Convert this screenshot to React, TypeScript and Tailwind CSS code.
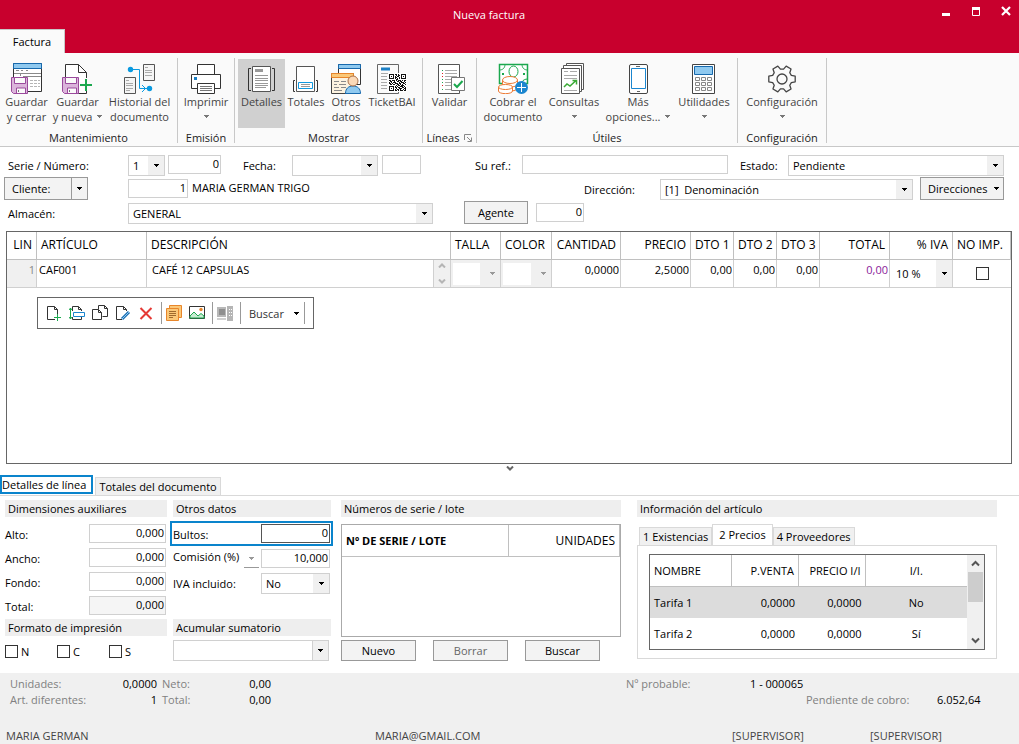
import { useState } from "react";
import type { ReactNode } from "react";
import clsx from "clsx";

function Caret({ className = "text-black" }: { className?: string }) {
  return (
    <svg width="5" height="3" viewBox="0 0 5 3" className={className} shapeRendering="crispEdges" aria-hidden="true">
      <path d="M0 0h5v1H0zM1 1h3v1H1zM2 2h1v1H2z" fill="currentColor" />
    </svg>
  );
}

function Icon({ children }: { children: ReactNode }) {
  return (
    <svg width="32" height="32" viewBox="0 0 32 32" fill="none" className="shrink-0" aria-hidden="true">
      {children}
    </svg>
  );
}

function Disk() {
  return (
    <g stroke="#9a4a9c">
      <path d="M.5 15.500h16v16h-14l-2-2z" fill="#dbb4db" />
      <path d="M3.500 15.500h11v6h-11z" fill="#fafafa" />
      <path d="M5.500 31v-5h9v5" fill="#fafafa" />
      <path d="M7.500 28v2" stroke="#777" />
    </g>
  );
}

function SaveCloseIcon() {
  return (
    <Icon>
      <path d="M2.500 1.500h28v28h-28z" fill="#fff" stroke="#333" />
      <path d="M2.500 1.500h28v5h-28z" fill="#8fc9ef" stroke="#1769ad" />
      <path d="M5 8.500h3m2 0h2m3 0h2M3 11.500h27M9.500 14v-3M12 14.500h18" stroke="#8a8a8a" />
      <path d="M19 18.500h3m1 0h3m1 0h2M19 21.500h3m1 0h3m1 0h2M19 24.500h3m1 0h3m1 0h2" stroke="#b5b5b5" />
      <Disk />
    </Icon>
  );
}

function SaveNewIcon() {
  return (
    <Icon>
      <path d="M3.500 2.500h13l8 8v21h-21z" fill="#fff" stroke="#333" />
      <path d="M16.500 2.500v8h8" stroke="#333" />
      <Disk />
      <path d="M18 22.500h13M24.500 16v13" stroke="#fafafa" strokeWidth="4" />
      <path d="M18 23h12M24 17v12" stroke="#1ba84e" strokeWidth="2" />
    </Icon>
  );
}

function HistoryIcon() {
  return (
    <Icon>
      <path d="M19.500 2.500h11v16h-11zM.5 15.500h11v16H.5z" fill="#f5f5f5" stroke="#555" />
      <path d="M21 5.500h3M21 8.500h7M21 10.500h7M21 13.500h7M2 18.500h3M2 21.500h7M2 23.500h7M2 26.500h7M2 28.500h4" stroke="#aaa" />
      <path d="M7 7.500h8.500v19H24M18 23l3.500 3.500L18 30" stroke="#0a9ae0" />
      <circle cx="6.500" cy="7.500" r="2.700" fill="#0a9ae0" />
      <circle cx="25.500" cy="26.500" r="2.700" fill="#0a9ae0" />
    </Icon>
  );
}

function PrintIcon() {
  return (
    <Icon>
      <path d="M7.500 12.500v-10h17v10M1.500 12.500h29v14h-29z" fill="#fff" stroke="#333" />
      <path d="M7.500 21.500h17v10h-17z" fill="#fff" stroke="#333" />
      <path d="M10 24.500h12M10 26.500h12M10 28.500h12" stroke="#777" />
      <path d="M4 15h3v3H4z" fill="#1b7fc4" />
    </Icon>
  );
}

function DetailsIcon() {
  return (
    <Icon>
      <path d="M6.500 4.500h18v25h-18z" fill="#fff" stroke="#555" />
      <path d="M9 8.500h8" stroke="#999" strokeWidth="3" />
      <path d="M9 13.500h13M9 16.500h13M9 18.500h13M9 21.500h13M9 23.500h13M9 25.500h11" stroke="#999" />
      <path d="M5 6.500H2.500v22H5M26 6.500h2.500v22H26" stroke="#333" />
    </Icon>
  );
}

function TotalsIcon() {
  return (
    <Icon>
      <path d="M6.500 4.500h18v25h-18z" fill="#fff" stroke="#555" />
      <path d="M5 18.500H3.500v11H5M26 18.500h1.500v11H26" stroke="#333" />
      <path d="M8.500 20.500h14v6h-14z" stroke="#1199e0" fill="#fff" />
      <path d="M11 22.500h9M11 24.500h9" stroke="#999" />
    </Icon>
  );
}

function OtherDataIcon() {
  return (
    <Icon>
      <path d="M8.500 2.500h22v20h-22z" fill="#fff" stroke="#333" />
      <path d="M8.500 2.500h22v4h-22z" fill="#8fc9ef" stroke="#1769ad" />
      <path d="M1.500 11.500h22v20h-22z" fill="#fdf3e0" stroke="#444" />
      <path d="M1.500 11.500h22v4h-22z" fill="#fbc878" stroke="#e8862b" />
      <path d="M4 19.500h5m2 0h5M4 22.500h3m2 0h7M4 25.500h5m2 0h5M4 28.500h8" stroke="#8a8a8a" />
      <path d="M15.500 31.500c0-5 3-7.500 7.500-7.500s7.500 2.500 7.500 7.500z" fill="#8fc9ef" stroke="#1769ad" />
      <circle cx="23" cy="19" r="5" fill="#fbd9b8" stroke="#a9714b" />
    </Icon>
  );
}

const QR_ROWS = [
  "11111011010011111",
  "10001001011010001",
  "10101010110010101",
  "10001011001010001",
  "11111010101011111",
  "00000001100000000",
  "11011101011101011",
  "01100100110110010",
  "10101110001011101",
  "11010011101100110",
  "01101100110101001",
  "00000001011011100",
  "11111010100111010",
  "10001011011001101",
  "10101001001110011",
  "10001010110100101",
  "11111011010111011",
];

function TicketIcon() {
  return (
    <Icon>
      <path d="M1.500 2.500h21v29h-21z" fill="#fafafa" stroke="#666" />
      <path d="M5 7h9" stroke="#1b7fc4" strokeWidth="3" />
      <path d="M5 11.500h13M5 14.500h6M5 17.500h6M5 20.500h6M5 23.500h6M5 26.500h6" stroke="#aaa" />
      <path d="M12 11h19v19H12z" fill="#fff" />
      <g fill="#111" transform="translate(13 12)" shapeRendering="crispEdges">
        {QR_ROWS.flatMap((row, y) =>
          row.split("").map((c, x) => (c === "1" ? <rect key={`${x}-${y}`} x={x} y={y} width="1" height="1" /> : null))
        )}
      </g>
    </Icon>
  );
}

function ValidateIcon() {
  return (
    <Icon>
      <path d="M4.500 2.500h21v29h-21z" fill="#fff" stroke="#555" />
      <path d="M11 8.500h12M11 11.500h12M11 14.500h12M11 17.500h7M11 20.500h7M11 23.500h7M11 27.500h12" stroke="#aaa" />
      <path d="M8 8.500h1m-1 9h1m-1 3h1m-1 7h1" stroke="#1ba84e" />
      <path d="M8 11.500h1m-1 3h1m-1 9h1" stroke="#d22" />
      <path d="M17.500 15.500h13v13h-13z" fill="#fff" stroke="#777" />
      <path d="M20 22l3 3 5.500-6" stroke="#1ba84e" strokeWidth="2" />
    </Icon>
  );
}

function CashIcon() {
  return (
    <Icon>
      <path d="M2.500 2.500h28v19h-28z" fill="#fff" stroke="#1ba84e" strokeWidth="1.500" />
      <path d="M2 8c4 0 6-2 6-6M31 8c-4 0-6-2-6-6M31 17c-3 0-5 1-6 3" stroke="#1ba84e" />
      <ellipse cx="16.500" cy="9.500" rx="4.500" ry="5.500" fill="#fff" stroke="#1ba84e" />
      <path d="M5 11h2v2H5zM26 11h2v2h-2z" fill="#1ba84e" />
      <g fill="#fff" stroke="#ec7a35">
        <path d="M5.500 18v8c0 4 15 4 15 0v-8" />
        <path d="M5.500 22c0 4 15 4 15 0" />
        <ellipse cx="13" cy="18" rx="7.500" ry="3.500" />
        <path d="M1.500 25v4c0 3.500 14 3.500 14 0v-4" />
        <ellipse cx="8.500" cy="25" rx="7" ry="2.500" />
      </g>
      <circle cx="24.500" cy="25.500" r="6.500" fill="#1b86cf" />
      <path d="M20 25.500h9M24.500 21v9" stroke="#fff" />
    </Icon>
  );
}

function QueriesIcon() {
  return (
    <Icon>
      <path d="M8.500 1.500h17v26h-17z" fill="#fff" stroke="#555" />
      <path d="M5.500 3.500h18v26h-18z" fill="#fff" stroke="#555" />
      <path d="M3.500 6.500h18v25h-18z" fill="#fff" stroke="#555" />
      <path d="M6 9.500h4m2 0h7M6 13.500h13M6 16.500h13M6 28.500h13" stroke="#aaa" />
      <path d="M6 25l3-3 3 2 6-5.500M14.500 18.500h4v4" stroke="#3aaa35" strokeWidth="1.500" />
    </Icon>
  );
}

function PhoneIcon() {
  return (
    <Icon>
      <rect x="7.500" y="2.500" width="18" height="29" rx="1.500" fill="#fff" stroke="#444" />
      <path d="M9.500 6.500h14v20h-14z" stroke="#1b86cf" />
      <path d="M14 4.500h4M15 29.500h3" stroke="#666" />
    </Icon>
  );
}

function CalculatorIcon() {
  return (
    <Icon>
      <path d="M4.500 2.500h22v29h-22z" fill="#fff" stroke="#444" />
      <path d="M6.500 4.500h18v8h-18z" fill="#8fc9ef" stroke="#1769ad" />
      <g stroke="#888">
        {[15.5, 20.5, 25.5].flatMap((y) => [7.5, 13.5, 19.5].map((x) => <path key={`${x}-${y}`} d={`M${x} ${y}h4v3h-4z`} />))}
      </g>
    </Icon>
  );
}

const gearPoints = [0, 60, 120, 180, 240, 300]
  .flatMap((base) => [
    [10, -21],
    [13.5, -12],
    [13.5, 12],
    [10, 21],
  ].map(([r, a]) => {
    const rad = ((base + a) * Math.PI) / 180;
    return `${16 + r * Math.cos(rad)},${17 + r * Math.sin(rad)}`;
  }))
  .join(" ");

function GearIcon() {
  return (
    <Icon>
      <polygon points={gearPoints} stroke="#444" strokeWidth="1.300" strokeLinejoin="round" />
      <circle cx="16" cy="17" r="5" stroke="#444" strokeWidth="1.300" />
    </Icon>
  );
}

type RibbonItem = {
  icon: ReactNode;
  lines: string[];
  caret?: "inline" | "below";
  active?: boolean;
  width: string;
};

const ribbonGroups: { label: string; launcher?: boolean; width: string; items: RibbonItem[] }[] = [
  {
    label: "Mantenimiento",
    width: "w-[178px]",
    items: [
      { icon: <SaveCloseIcon />, lines: ["Guardar", "y cerrar"], width: "w-[52px]" },
      { icon: <SaveNewIcon />, lines: ["Guardar", "y nueva"], caret: "inline", width: "w-[50px]" },
      { icon: <HistoryIcon />, lines: ["Historial del", "documento"], width: "w-[74px]" },
    ],
  },
  { label: "Emisión", width: "w-[57px]", items: [{ icon: <PrintIcon />, lines: ["Imprimir"], caret: "below", width: "w-14" }] },
  {
    label: "Mostrar",
    width: "w-[188px]",
    items: [
      { icon: <DetailsIcon />, lines: ["Detalles"], active: true, width: "w-[47px]" },
      { icon: <TotalsIcon />, lines: ["Totales"], width: "w-[42px]" },
      { icon: <OtherDataIcon />, lines: ["Otros", "datos"], width: "w-[38px]" },
      { icon: <TicketIcon />, lines: ["TicketBAI"], width: "w-[54px]" },
    ],
  },
  { label: "Líneas", launcher: true, width: "w-[54px]", items: [{ icon: <ValidateIcon />, lines: ["Validar"], width: "w-[52px]" }] },
  {
    label: "Útiles",
    width: "w-[261px]",
    items: [
      { icon: <CashIcon />, lines: ["Cobrar el", "documento"], width: "w-[66px]" },
      { icon: <QueriesIcon />, lines: ["Consultas"], caret: "below", width: "w-[56px]" },
      { icon: <PhoneIcon />, lines: ["Más", "opciones..."], caret: "inline", width: "w-[72px]" },
      { icon: <CalculatorIcon />, lines: ["Utilidades"], caret: "below", width: "w-[60px]" },
    ],
  },
  { label: "Configuración", width: "w-[89px]", items: [{ icon: <GearIcon />, lines: ["Configuración"], caret: "below", width: "w-[80px]" }] },
];

function RibbonButton({ item }: { item: RibbonItem }) {
  return (
    <button
      className={clsx(
        "flex h-[69px] flex-col items-center pt-[3px] leading-[15px] text-[#444]",
        item.width,
        item.active && "bg-[#d0d0d0]"
      )}
    >
      {item.icon}
      {item.lines.map((line, i) => (
        <span key={line} className="flex items-center gap-[5px] whitespace-nowrap">
          {line}
          {item.caret === "inline" && i === item.lines.length - 1 && <Caret className="text-[#777]" />}
        </span>
      ))}
      {item.caret === "below" && (
        <span className="flex h-[15px] items-center">
          <Caret className="text-[#777]" />
        </span>
      )}
    </button>
  );
}

function Ribbon() {
  return (
    <div className="flex h-[94px] overflow-hidden border-b border-[#c8c8c8] bg-[#fafafa] pt-[5px]">
      {ribbonGroups.map((group) => (
        <div key={group.label} className={clsx("flex h-[85px] shrink-0 flex-col items-center border-r border-[#c8c8c8]", group.width)}>
          <div className="flex pt-px">
            {group.items.map((item) => (
              <RibbonButton key={item.lines.join(" ")} item={item} />
            ))}
          </div>
          <div className="mt-0.5 flex items-center gap-[5px] leading-[16px] text-[#222]">
            {group.label}
            {group.launcher && (
              <button aria-label="Opciones de líneas">
                <svg width="8" height="8" viewBox="0 0 8 8" fill="none" stroke="#888" aria-hidden="true">
                  <path d="M.5 6V.5H7M3 3l4 4M7.500 3.500v4h-4" />
                </svg>
              </button>
            )}
          </div>
        </div>
      ))}
    </div>
  );
}

function Select({
  id,
  value,
  className,
  label,
  disabled,
  arrow = "bg-[#f0f0f0]",
}: {
  id?: string;
  value: string;
  className?: string;
  label?: string;
  disabled?: boolean;
  arrow?: string;
}) {
  return (
    <span className={clsx("grid h-[21px] border border-[#d0d0d0] bg-white", className)}>
      <select
        id={id}
        aria-label={label}
        disabled={disabled}
        className="col-start-1 row-start-1 w-full min-w-0 appearance-none bg-transparent pl-1 outline-none"
        defaultValue={value}
      >
        <option>{value}</option>
      </select>
      <span className={clsx("pointer-events-none col-start-1 row-start-1 flex w-4 items-center justify-center justify-self-end", arrow)}>
        <Caret className={disabled ? "text-[#999]" : "text-black"} />
      </span>
    </span>
  );
}

function Field({ id, value = "", className, label }: { id?: string; value?: string; className?: string; label?: string }) {
  return (
    <input
      id={id}
      aria-label={label}
      defaultValue={value}
      className={clsx("h-[19px] min-w-0 border border-[#d0d0d0] pr-px pb-0.5 text-right outline-none", className)}
    />
  );
}

function HeaderForm() {
  return (
    <div className="grid gap-y-[3px] pt-2 pr-[15px] pb-1">
      <div className="flex h-[19px] items-start">
        <label htmlFor="serie" className="w-[128px] shrink-0 pt-[3px] pl-2">Serie / Número:</label>
        <Select id="serie" value="1" className="w-[37px]" />
        <Field label="Número" value="0" className="ml-[3px] w-[53px]" />
        <label htmlFor="fecha" className="ml-[22px] w-[49px] pt-[3px]">Fecha:</label>
        <Select id="fecha" value="" className="w-[86px]" />
        <Field label="Hora" className="ml-1 w-[39px]" />
        <label htmlFor="ref" className="ml-[54px] w-[47px] shrink-0 pt-[3px]">Su ref.:</label>
        <Field id="ref" className="flex-1" />
        <label htmlFor="estado" className="ml-3 w-12 shrink-0 pt-[3px]">Estado:</label>
        <Select id="estado" value="Pendiente" className="w-[216px]" />
      </div>
      <div className="flex h-[23px] items-start">
        <div className="ml-1 flex h-[23px] w-[84px] border border-[#999] bg-[#f3f3f3]">
          <button className="flex-1 pl-[7px] text-left">Cliente:</button>
          <button aria-label="Más opciones de cliente" className="flex w-4 items-center justify-center border-l border-[#999]">
            <Caret />
          </button>
        </div>
        <Field label="Código de cliente" value="1" className="mt-0.5 ml-10 w-[60px]" />
        <span className="ml-1 pt-[3px]">MARIA GERMAN TRIGO</span>
        <label htmlFor="direccion" className="ml-auto w-[76px] pt-[5px]">Dirección:</label>
        <Select id="direccion" value={"[1]\u00a0 Denominación"} className="mt-0.5 w-[253px]" />
        <button className="ml-[7px] flex h-[23px] w-[84px] items-center justify-between border border-[#999] bg-[#f3f3f3] pr-1 pl-[7px]">
          Direcciones
          <Caret />
        </button>
      </div>
      <div className="flex h-[24px] items-start">
        <label htmlFor="almacen" className="w-[128px] shrink-0 pt-[3px] pl-2">Almacén:</label>
        <Select id="almacen" value="GENERAL" className="w-[305px]" />
        <button className="-mt-0.5 ml-[31px] h-[23px] w-16 border border-[#999] bg-[#f3f3f3]">Agente</button>
        <Field label="Agente" value="0" className="ml-2 w-12" />
      </div>
    </div>
  );
}

const columns = [
  { name: "LIN", width: "w-[30px]", align: "text-right" },
  { name: "ARTÍCULO", width: "w-[110px]", align: "text-left" },
  { name: "DESCRIPCIÓN", width: "", align: "text-left" },
  { name: "TALLA", width: "w-[50px]", align: "text-left" },
  { name: "COLOR", width: "w-[51px]", align: "text-left" },
  { name: "CANTIDAD", width: "w-[69px]", align: "text-right" },
  { name: "PRECIO", width: "w-[70px]", align: "text-right" },
  { name: "DTO 1", width: "w-[43px]", align: "text-right" },
  { name: "DTO 2", width: "w-[43px]", align: "text-right" },
  { name: "DTO 3", width: "w-[43px]", align: "text-right" },
  { name: "TOTAL", width: "w-[70px]", align: "text-right" },
  { name: "% IVA", width: "w-[63px]", align: "text-right" },
  { name: "NO IMP.", width: "w-[58px]", align: "text-left" },
];

const amounts = [
  { name: "Cantidad", value: "0,0000" },
  { name: "Precio", value: "2,5000" },
  { name: "Dto 1", value: "0,00" },
  { name: "Dto 2", value: "0,00" },
  { name: "Dto 3", value: "0,00" },
  { name: "Total", value: "0,00" },
];

const toolbar: { label: string; icon: ReactNode }[] = [
  {
    label: "Nueva línea",
    icon: (
      <>
        <path d="M9 14.500H1.500v-13h7l3 3V9" fill="#fff" stroke="#333" />
        <path d="M8.500 1.500v3h3" stroke="#333" />
        <path d="M8 12.500h7M11.500 9v7" stroke="#1ba84e" />
      </>
    ),
  },
  {
    label: "Insertar línea",
    icon: (
      <>
        <path d="M3.500 6V1.500h6l3 3V6M3.500 12v2.500h9V12M9.500 1.500v3h3" stroke="#333" />
        <path d="M4.500 7.500h11v4h-11z" fill="#fff" stroke="#1b86cf" />
        <path d="M1.500 3v11M0 5l1.500-2L3 5M0 12l1.500 2L3 12" stroke="#1ba84e" />
      </>
    ),
  },
  {
    label: "Duplicar línea",
    icon: (
      <>
        <path d="M6.500 4V.5h6l3 3v8h-5M12.500.5v3h3" stroke="#333" />
        <path d="M.5 4.500h6l3 3v7h-9zM6.500 4.500v3h3" fill="#fff" stroke="#333" />
      </>
    ),
  },
  {
    label: "Editar línea",
    icon: (
      <>
        <path d="M7 14.500H1.500v-13h7l3 3V6M8.500 1.500v3h3" stroke="#333" />
        <path d="M7 14l7-7" stroke="#1b6fb5" strokeWidth="3" />
        <path d="M7 14l7-7" stroke="#8fc9ef" />
      </>
    ),
  },
  { label: "Eliminar línea", icon: <path d="M2.500 3l11 11m0-11l-11 11" stroke="#e53935" strokeWidth="2" /> },
  {
    label: "Notas",
    icon: (
      <>
        <path d="M3.500.5h12v12h-12z" fill="#fbc878" stroke="#e8862b" />
        <path d="M.5 3.500h12v12H.5z" fill="#fbc878" stroke="#e8862b" />
        <path d="M3 6.500h7M3 8.500h7M3 10.500h7M3 12.500h4" stroke="#a06a2c" />
      </>
    ),
  },
  {
    label: "Imagen",
    icon: (
      <>
        <path d="M.5 1.500h15v12H.5z" fill="#fff" stroke="#333" />
        <path d="M1 11l4-4 4 4 3-2.500 3 2.500v2H1z" fill="#c8ecd2" stroke="#1ba84e" />
        <circle cx="12" cy="4.500" r="1.700" fill="#e8862b" />
      </>
    ),
  },
  {
    label: "Balanza",
    icon: (
      <>
        <path d="M0 2h9v10H0z" fill="#b8b8b8" />
        <path d="M2 4h6v6H2z" fill="#8f8f8f" />
        <path d="M0 13h9v2H0z" fill="#d0d0d0" />
        <path d="M10 1h6v15h-6z" fill="#b5b5b5" />
        <path d="M12 4h1v1h-1zm2 0h1v1h-1zM12 7h1v1h-1zm2 0h1v1h-1zM12 10h1v1h-1zm2 0h1v1h-1z" fill="#fff" />
      </>
    ),
  },
];

function GridToolbar() {
  return (
    <div className="mt-[9px] ml-[30px] flex h-8 w-[277px] items-center border border-[#666] pl-2">
      {toolbar.map((tool, i) => (
        <span key={tool.label} className="flex items-center">
          {(i === 5 || i === 7) && <span className="mr-1 h-[22px] w-px bg-[#999]" />}
          <button aria-label={tool.label} className="mr-[7px] h-4 w-4">
            <svg width="16" height="16" viewBox="0 0 16 16" fill="none" aria-hidden="true">{tool.icon}</svg>
          </button>
        </span>
      ))}
      <span className="h-[22px] w-px bg-[#999]" />
      <button className="flex h-[22px] w-16 items-center justify-between border-r border-[#999] pr-[5px] pl-2 text-[#333]">
        Buscar
        <Caret />
      </button>
    </div>
  );
}

function InvoiceLines() {
  const cell = "border-r border-b border-[#d0d0d0] p-0";
  return (
    <div className="mr-[7px] ml-1.5 flex min-h-[200px] flex-1 flex-col border border-[#666]">
      <table className="w-full table-fixed border-separate border-spacing-0">
        <thead>
          <tr className="h-7 text-xs">
            {columns.map((c) => (
              <th
                key={c.name}
                className={clsx("border-r border-b border-[#c0c0c0] px-1 pt-0 pb-0.5 font-normal whitespace-nowrap", c.width, c.align)}
              >
                {c.name}
              </th>
            ))}
          </tr>
        </thead>
        <tbody>
          <tr className="h-7 align-top">
            <td className={clsx(cell, "bg-[#f0f0f0] pt-0.5 pr-px text-right text-[#888]")}>1</td>
            <td className={cell}>
              <input aria-label="Artículo" defaultValue="CAF001" className="h-[18px] w-full pl-0.5 outline-none" />
            </td>
            <td className={cell}>
              <div className="flex">
                <input aria-label="Descripción" defaultValue="CAFÉ 12 CAPSULAS" className="h-[18px] min-w-0 flex-1 pl-[5px] outline-none" />
                <span className="flex h-[27px] w-[17px] flex-col items-center justify-between border-l border-[#d0d0d0] bg-[#f0f0f0] py-[3px]">
                  <svg width="8" height="5" viewBox="0 0 8 5" fill="none" stroke="#b5b5b5" strokeWidth="2" aria-hidden="true">
                    <path d="M1 4.500l3-3 3 3" />
                  </svg>
                  <svg width="8" height="5" viewBox="0 0 8 5" fill="none" stroke="#b5b5b5" strokeWidth="2" aria-hidden="true">
                    <path d="M1 .5l3 3 3-3" />
                  </svg>
                </span>
              </div>
            </td>
            {["Talla", "Color"].map((name) => (
              <td key={name} className={clsx(cell, "bg-[#f0f0f0]")}>
                <div className="flex h-[27px] items-center bg-[#f0f0f0] px-0.5">
                  <span className="grid flex-1">
                    <select aria-label={name} disabled className="col-start-1 row-start-1 mr-[18px] h-[22px] appearance-none bg-white" />
                    <span className="pointer-events-none col-start-1 row-start-1 mr-[3px] self-center justify-self-end">
                      <Caret className="text-[#999]" />
                    </span>
                  </span>
                </div>
              </td>
            ))}
            {amounts.map((a) => (
              <td key={a.name} className={cell}>
                <input
                  aria-label={a.name}
                  defaultValue={a.value}
                  className={clsx("h-[18px] w-full pr-px text-right outline-none", a.name === "Total" && "text-[#8a1a9a]")}
                />
              </td>
            ))}
            <td className={cell}>
              <Select label="% IVA" value="10 %" className="h-[27px] border-0 pl-0.5" />
            </td>
            <td className="border-b border-[#d0d0d0] p-0 text-center">
              <input
                type="checkbox"
                aria-label="No imprimir"
                className="mt-[7px] h-[13px] w-[13px] appearance-none border border-[#333] bg-white checked:bg-[#333]"
              />
            </td>
          </tr>
        </tbody>
      </table>
      <GridToolbar />
    </div>
  );
}

function SectionTitle({ children, className }: { children: ReactNode; className?: string }) {
  return <h3 className={clsx("h-[17px] bg-[#eee] pl-[3px] leading-[17px]", className)}>{children}</h3>;
}

function Check({ label }: { label: string }) {
  return (
    <label className="flex w-[52px] items-center gap-[3px]">
      <input type="checkbox" className="h-[13px] w-[13px] appearance-none border border-[#333] bg-white checked:bg-[#333]" />
      {label}
    </label>
  );
}

function ArticleInfo() {
  const [tab, setTab] = useState("2 Precios");
  const rates = [
    { name: "Tarifa 1", price: "0,0000", gross: "0,0000", included: "No" },
    { name: "Tarifa 2", price: "0,0000", gross: "0,0000", included: "Sí" },
  ];
  return (
    <section className="ml-4 flex-[360_1_0%]">
      <SectionTitle>Información del artículo</SectionTitle>
      <div className="flex h-7 items-end pl-0.5" role="tablist">
        {["1 Existencias", "2 Precios", "4 Proveedores"].map((t) => (
          <button
            key={t}
            role="tab"
            aria-selected={tab === t}
            onClick={() => setTab(t)}
            className={clsx(
              "border border-b-0 border-[#d9d9d9] whitespace-nowrap",
              tab === t ? "h-[21px] bg-white px-1.5 pb-0.5" : "h-[18px] bg-[#f0f0f0] px-[3px]"
            )}
          >
            {t}
          </button>
        ))}
      </div>
      <div className="border border-[#d9d9d9] px-[11px] pt-2 pb-2">
        <div className="flex border border-[#666]">
          <table className="min-w-0 flex-1 table-fixed border-separate border-spacing-0">
            <thead>
              <tr className="h-8">
                <th className="w-[26%] border-r border-b border-[#c0c0c0] py-0 pr-0 pl-1 text-left font-normal">NOMBRE</th>
                <th className="w-[21%] border-r border-b border-[#c0c0c0] py-0 pr-1 pl-0 text-right font-normal">P.VENTA</th>
                <th className="w-[21%] border-r border-b border-[#c0c0c0] py-0 pr-1 pl-0 text-right font-normal">PRECIO I/I</th>
                <th className="border-b border-[#c0c0c0] p-0 font-normal">I/I.</th>
              </tr>
            </thead>
            <tbody>
              {rates.map((r, i) => (
                <tr key={r.name} className={clsx("h-[31px]", i === 0 && "bg-[#dcdcdc]")}>
                  <td className="py-0 pr-0 pl-1">{r.name}</td>
                  <td className="py-0 pr-1 pl-0 text-right">{r.price}</td>
                  <td className="py-0 pr-1 pl-0 text-right">{r.gross}</td>
                  <td className="p-0 text-center">{r.included}</td>
                </tr>
              ))}
            </tbody>
          </table>
          <div className="flex w-[17px] flex-col items-center bg-[#f0f0f0]">
            <svg width="17" height="17" viewBox="0 0 17 17" fill="none" stroke="#555" strokeWidth="2" aria-hidden="true">
              <path d="M5 10.500L8.500 7l3.500 3.500" />
            </svg>
            <span className="h-[30px] w-[15px] bg-[#cdcdcd]" />
            <svg width="17" height="17" viewBox="0 0 17 17" fill="none" stroke="#555" strokeWidth="2" className="mt-auto" aria-hidden="true">
              <path d="M5 6.500l3.500 3.500L12 6.500" />
            </svg>
          </div>
        </div>
      </div>
    </section>
  );
}

function LineDetails() {
  return (
    <div className="flex border-t border-[#d9d9d9] pt-1 pr-[22px] pb-3 pl-[5px]">
      <section className="w-[162px] shrink-0">
        <SectionTitle>Dimensiones auxiliares</SectionTitle>
        <div className="mt-[7px] grid gap-[5px]">
          {["Alto:", "Ancho:", "Fondo:", "Total:"].map((name) => (
            <div key={name} className="flex h-[19px]">
              <label htmlFor={`dim-${name}`} className="w-[84px] pt-[3px]">{name}</label>
              <Field id={`dim-${name}`} value="0,000" className={clsx("w-[77px]", name === "Total:" && "bg-[#f5f5f5]")} />
            </div>
          ))}
        </div>
        <SectionTitle className="mt-1">Formato de impresión</SectionTitle>
        <div className="mt-2 flex h-[15px] items-center">
          <Check label="N" />
          <Check label="C" />
          <Check label="S" />
        </div>
      </section>

      <section className="ml-[3px] w-[163px] shrink-0">
        <SectionTitle className="mr-0.5 ml-[3px]">Otros datos</SectionTitle>
        <div className="mt-1 flex h-[25px] items-center border-2 border-[#0a84cc] pl-px">
          <label htmlFor="bultos" className="w-[88px] pt-0.5">Bultos:</label>
          <input
            id="bultos"
            defaultValue="0"
            className="h-[19px] w-[69px] border border-[#555] pr-px pb-0.5 text-right outline-none"
          />
        </div>
        <div className="mt-[3px] flex h-[19px] items-start pl-[3px]">
          <label htmlFor="comision" className="whitespace-nowrap">Comisión (%)</label>
          <button aria-label="Tipo de comisión" className="mr-[2px] ml-auto flex h-[19px] w-[15px] items-center justify-center border-b border-[#999]">
            <Caret className="text-[#999]" />
          </button>
          <Field id="comision" value="10,000" className="mr-[3px] w-[69px]" />
        </div>
        <div className="mt-[5px] flex h-[21px] items-start pl-[3px]">
          <label htmlFor="iva" className="w-[88px] pt-[3px]">IVA incluido:</label>
          <Select id="iva" value="No" className="w-[69px]" />
        </div>
        <SectionTitle className="mt-[25px] mr-0.5 ml-[3px]">Acumular sumatorio</SectionTitle>
        <Select label="Acumular sumatorio" value="" className="mt-1 mr-1 ml-[3px]" arrow="bg-[#f0f0f0] border-l border-[#d0d0d0]" />
      </section>

      <section className="ml-2 flex-[280_1_0%]">
        <SectionTitle>Números de serie / lote</SectionTitle>
        <div className="mt-[7px] h-[113px] border border-[#aaa]">
          <table className="w-full table-fixed border-separate border-spacing-0">
            <thead>
              <tr className="h-8">
                <th className="w-[60%] border-r border-b border-[#c0c0c0] py-0 pr-0 pl-1 text-left font-bold">Nº DE SERIE / LOTE</th>
                <th className="border-r border-b border-[#c0c0c0] py-0 pr-1 pl-0 text-right text-xs font-normal">UNIDADES</th>
              </tr>
            </thead>
          </table>
        </div>
        <div className="mt-[3px] flex gap-[17px]">
          <button className="h-[21px] w-[75px] border border-[#999] bg-[#f3f3f3]">Nuevo</button>
          <button disabled className="h-[21px] w-[75px] border border-[#999] bg-[#f3f3f3] text-[#666]">Borrar</button>
          <button className="h-[21px] w-[75px] border border-[#999] bg-[#f3f3f3]">Buscar</button>
        </div>
      </section>

      <ArticleInfo />
    </div>
  );
}

function Footer() {
  return (
    <footer className="bg-[#f0f0f0] pt-[3px] text-[#444]">
      <div className="flex justify-between leading-4">
        <dl className="grid grid-cols-[90px_57px_50px_64px] pl-2.5 text-[#808080]">
          <dt>Unidades:</dt>
          <dd className="text-right text-black">0,0000</dd>
          <dt className="pl-[5px]">Neto:</dt>
          <dd className="text-right text-black">0,00</dd>
          <dt>Art. diferentes:</dt>
          <dd className="text-right text-black">1</dd>
          <dt className="pl-[5px]">Total:</dt>
          <dd className="text-right text-black">0,00</dd>
        </dl>
        <dl className="grid grid-cols-[124px_56px_131px_82px] text-[#808080]">
          <dt>Nº probable:</dt>
          <dd className="col-span-3 text-black">1 - 000065</dd>
          <dt className="col-start-3">Pendiente de cobro:</dt>
          <dd className="text-black">6.052,64</dd>
        </dl>
      </div>
      <div className="mt-5 grid h-4 grid-cols-[369fr_357fr_138fr_149fr] pl-1.5 leading-4">
        <span>MARIA GERMAN</span>
        <span>MARIA@GMAIL.COM</span>
        <span>[SUPERVISOR]</span>
        <span>[SUPERVISOR]</span>
      </div>
    </footer>
  );
}

export default function App() {
  const [tab, setTab] = useState("Detalles de línea");

  return (
    <div className="flex min-h-screen flex-col bg-white font-['Open_Sans','Noto_Sans',sans-serif] text-[11px] leading-[15px] text-black">
      <header className="bg-[#c8002d]">
        <div className="flex h-[29px] text-white">
          <h1 className="flex-1 pt-[7px] pl-12 text-center">Nueva factura</h1>
          <div className="flex w-[89px] items-start gap-5 pt-[6px] pl-[11px]">
            <button aria-label="Minimizar">
              <svg width="10" height="12" viewBox="0 0 10 12" aria-hidden="true">
                <path d="M1 7h8v3H1z" fill="#fff" />
              </svg>
            </button>
            <button aria-label="Maximizar">
              <svg width="10" height="12" viewBox="0 0 10 12" fill="none" aria-hidden="true">
                <path d="M1.500 1.500h7v8h-7z" stroke="#fff" />
                <path d="M1 1h8v3H1z" fill="#fff" />
              </svg>
            </button>
            <button aria-label="Cerrar">
              <svg width="10" height="12" viewBox="0 0 10 12" fill="none" aria-hidden="true">
                <path d="M1 1l8 8m0-8L1 9" stroke="#fff" strokeWidth="2.200" />
              </svg>
            </button>
          </div>
        </div>
        <button className="block h-6 w-[65px] border-t border-r border-[#c8c8c8] bg-[#fafafa] text-black">Factura</button>
      </header>

      <Ribbon />
      <HeaderForm />
      <InvoiceLines />

      <button aria-label="Contraer panel" className="flex h-[11px] justify-center pt-0.5">
        <svg width="8" height="5" viewBox="0 0 8 5" fill="none" stroke="#666" strokeWidth="2" aria-hidden="true">
          <path d="M1 .5l3 3 3-3" />
        </svg>
      </button>

      <div className="flex h-5 items-end" role="tablist">
        {["Detalles de línea", "Totales del documento"].map((t) => (
          <button
            key={t}
            role="tab"
            aria-selected={tab === t}
            onClick={() => setTab(t)}
            className={clsx(
              "whitespace-nowrap",
              tab === t
                ? "mb-px h-[19px] border-2 border-[#0a84cc] bg-white pr-[5px] pb-0.5"
                : "ml-0.5 h-[18px] border border-b-0 border-[#d9d9d9] bg-[#f0f0f0] px-[3px]"
            )}
          >
            {t}
          </button>
        ))}
      </div>
      <LineDetails />
      <Footer />
    </div>
  );
}
